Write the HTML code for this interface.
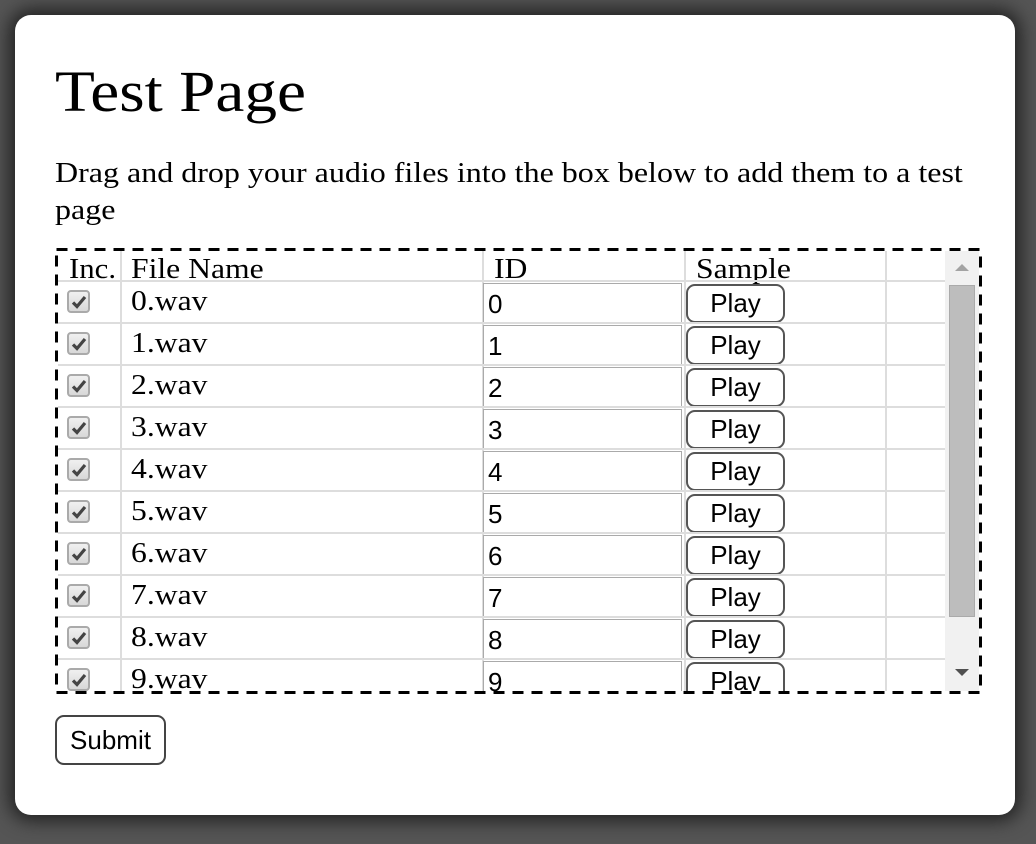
<!DOCTYPE html>
<html><head><style>
*{box-sizing:border-box;margin:0;padding:0}
body{width:1036px;height:844px;background:#555;position:relative;overflow:hidden;font-family:"Liberation Serif",serif}
.card{position:absolute;left:15px;top:15px;width:1000px;height:800px;background:#fff;border-radius:16px;box-shadow:0 0 18px 6px #222}
.a{position:absolute}
.s{transform:scaleX(1.13);transform-origin:0 0;white-space:nowrap}
h1{position:absolute;left:55px;top:58px;font-weight:normal;font-size:58px;line-height:68px}
p{position:absolute;left:55px;top:155px;font-size:29px;line-height:37px}
.box{position:absolute;left:58px;top:251px;width:921px;height:440px;overflow:hidden}
.vl{position:absolute;top:0;width:2px;height:440px;background:#ddd}
.hl{position:absolute;left:0;width:887px;height:2px;background:#ddd}
.cb{position:absolute;left:9px;width:23px;height:23px;border:2px solid #aaa;border-radius:4px;background:linear-gradient(#f0f0f0,#d8d8d8)}
.cb svg{position:absolute;left:2px;top:2px}
.fn{position:absolute;left:73px;font-size:28px;line-height:30px}
.in{position:absolute;left:425px;width:199px;height:40px;border:1px solid #aaa;font-family:"Liberation Sans",sans-serif;font-size:26px;padding-left:4px;line-height:40px}
.pl{position:absolute;left:628px;width:99px;height:39px;border:2px solid #555;border-radius:9px;font-family:"Liberation Sans",sans-serif;font-size:26px;text-align:center;line-height:35px;background:#fff}
.th{position:absolute;top:4px;font-size:28px;line-height:30px}
</style></head><body>
<div class="card"></div>
<h1 class="s" style="transform:scaleX(1.125)">Test Page</h1>
<p class="s" style="transform:scaleX(1.104)">Drag and drop your audio files into the box below to add them to a test<br>page</p>
<svg class="a" style="left:55px;top:248px" width="927" height="446"><rect x="1.5" y="1.5" width="924" height="443" fill="none" stroke="#000" stroke-width="3" stroke-dasharray="11 8"/></svg>
<div class="box">
<div class="vl" style="left:62px"></div>
<div class="vl" style="left:424px"></div>
<div class="vl" style="left:626px"></div>
<div class="vl" style="left:827px"></div>
<div class="th s" style="left:11px;transform:scaleX(1.1)">Inc.</div>
<div class="th s" style="left:73px">File Name</div>
<div class="th s" style="left:436px">ID</div>
<div class="th s" style="left:638px">Sample</div>
<div id="rows"></div>
<div class="a" style="left:887px;top:0;width:34px;height:440px;background:#f1f1f1"></div>
<div class="a" style="left:891px;top:34px;width:26px;height:332px;background:#bdbdbd;border:1px solid #aaa"></div>
<div class="a" style="left:897px;top:13px;width:0;height:0;border-left:7px solid transparent;border-right:7px solid transparent;border-bottom:7px solid #a3a3a3"></div>
<div class="a" style="left:897px;top:418px;width:0;height:0;border-left:7px solid transparent;border-right:7px solid transparent;border-top:7px solid #505050"></div>
</div>
<div class="a" style="left:55px;top:715px;width:111px;height:50px;border:2px solid #444;border-radius:9px;font-family:'Liberation Sans',sans-serif;font-size:26px;text-align:center;line-height:46px">Submit</div>
<script>
var h='';for(var i=0;i<10;i++){var t=31+42*i;
h+='<div class="hl" style="top:'+(t-2)+'px"></div>';
h+='<div class="cb" style="top:'+(t+8)+'px"><svg width="16" height="16" viewBox="0 0 16 16"><path d="M2 8.5 L6 12.5 L14 3" fill="none" stroke="#444" stroke-width="3.2"/></svg></div>';
h+='<div class="fn s" style="top:'+(t+5)+'px">'+i+'.wav</div>';
h+='<div class="in" style="top:'+(t+1)+'px">'+i+'</div>';
h+='<div class="pl" style="top:'+(t+2)+'px">Play</div>';}
document.getElementById('rows').innerHTML=h;
</script>
</body></html>
